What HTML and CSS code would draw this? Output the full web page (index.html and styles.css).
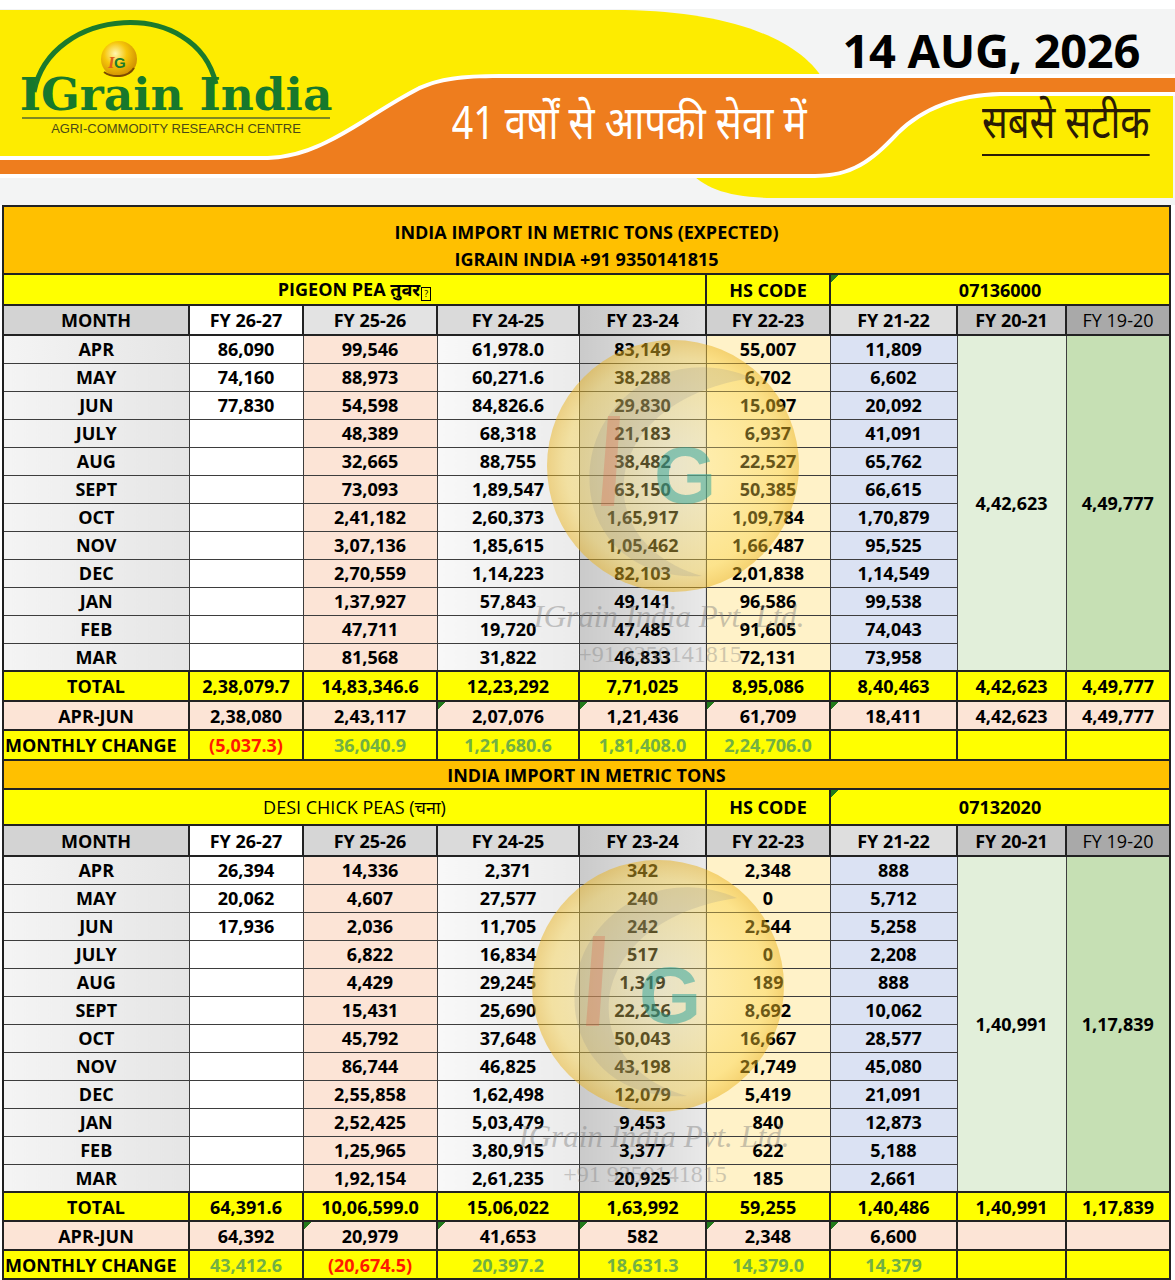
FILE: index.html
```html
<!DOCTYPE html>
<html lang="en">
<head>
<meta charset="utf-8">
<title>IGrain India - India Import</title>
<link rel="stylesheet" href="styles.css">
</head>
<body>
<header class="banner">
  <svg class="banner-art" width="1175" height="205" viewBox="0 0 1175 205">
    <defs>
      <radialGradient id="ball" cx="40%" cy="35%" r="70%">
        <stop offset="0" stop-color="#fff7b0"/>
        <stop offset="0.45" stop-color="#f6c60a"/>
        <stop offset="1" stop-color="#c98600"/>
      </radialGradient>
    </defs>
    <rect width="1175" height="205" fill="#f3f4f4"/>
    <rect width="1175" height="9" fill="#ffffff"/>
    <path d="M0 10 H625 C725 12 800 36 826 84 L826 156 H0 Z" fill="#fdec00"/>
    <path d="M688 170 C704 188 726 197 772 198 H1173 V86 H880 Z" fill="#fdec00"/>
    <path d="M-10 160 H268 C325 158 365 118 420 90 C440 81 460 78 500 78 H1185 V92 H1000 C958 93 922 106 896 132 C870 160 850 174 815 174 H-10 Z" fill="#ffffff" stroke="#ffffff" stroke-width="8" stroke-linejoin="round"/>
    <path d="M-10 160 H268 C325 158 365 118 420 90 C440 81 460 78 500 78 H1185 V92 H1000 C958 93 922 106 896 132 C870 160 850 174 815 174 H-10 Z" fill="#ee7d1e"/>
    <path d="M34 92 C50 6 196 -4 216 84" fill="none" stroke="#1b7a2c" stroke-width="5"/>
    <circle cx="119" cy="59" r="18" fill="url(#ball)"/>
    <path d="M104 72 C112 78 128 78 134 68" fill="none" stroke="#7a4a00" stroke-width="2"/>
    <text x="108" y="68" font-family="Liberation Serif, serif" font-style="italic" font-weight="700" font-size="17" fill="#e0601a">I</text>
    <text x="114" y="68" font-family="Liberation Sans, sans-serif" font-weight="700" font-size="15" fill="#1b7a2c">G</text>
  </svg>
  <div class="brand">
    <span class="brand-name">IGrain India</span>
    <span class="brand-rule"></span>
    <span class="brand-sub">AGRI-COMMODITY RESEARCH CENTRE</span>
  </div>
  <div class="date">14 AUG, 2026</div>
  <div class="tagline">41 वर्षों से आपकी सेवा में</div>
  <div class="motto">सबसे सटीक</div>
</header>

<main class="sheet">
  <table class="grid">
    <colgroup>
      <col class="c-month"><col class="c-2627"><col class="c-2526"><col class="c-2425"><col class="c-2324"><col class="c-2223"><col class="c-2122"><col class="c-2021"><col class="c-1920">
    </colgroup>
    <tbody>
      <tr class="r-title"><td colspan="9">INDIA IMPORT IN METRIC TONS (EXPECTED)<br>IGRAIN INDIA +91 9350141815</td></tr>
      <tr class="r-prod"><td colspan="5">PIGEON PEA तुवर<span class="tofu">?</span></td><td>HS CODE</td><td colspan="3" class="tri">07136000</td></tr>
      <tr class="r-head"><td class="h-month">MONTH</td><td class="h-2627">FY 26-27</td><td class="h-2526">FY 25-26</td><td class="h-2425">FY 24-25</td><td class="h-2324">FY 23-24</td><td class="h-2223">FY 22-23</td><td class="h-2122">FY 21-22</td><td class="h-2021">FY 20-21</td><td class="h-1920">FY 19-20</td></tr>
      <tr class="d"><td>APR</td><td>86,090</td><td>99,546</td><td>61,978.0</td><td>83,149</td><td>55,007</td><td>11,809</td><td rowspan="12" class="m20">4,42,623</td><td rowspan="12" class="m19">4,49,777</td></tr>
      <tr class="d"><td>MAY</td><td>74,160</td><td>88,973</td><td>60,271.6</td><td>38,288</td><td>6,702</td><td>6,602</td></tr>
      <tr class="d"><td>JUN</td><td>77,830</td><td>54,598</td><td>84,826.6</td><td>29,830</td><td>15,097</td><td>20,092</td></tr>
      <tr class="d"><td>JULY</td><td></td><td>48,389</td><td>68,318</td><td>21,183</td><td>6,937</td><td>41,091</td></tr>
      <tr class="d"><td>AUG</td><td></td><td>32,665</td><td>88,755</td><td>38,482</td><td>22,527</td><td>65,762</td></tr>
      <tr class="d"><td>SEPT</td><td></td><td>73,093</td><td>1,89,547</td><td>63,150</td><td>50,385</td><td>66,615</td></tr>
      <tr class="d"><td>OCT</td><td></td><td>2,41,182</td><td>2,60,373</td><td>1,65,917</td><td>1,09,784</td><td>1,70,879</td></tr>
      <tr class="d"><td>NOV</td><td></td><td>3,07,136</td><td>1,85,615</td><td>1,05,462</td><td>1,66,487</td><td>95,525</td></tr>
      <tr class="d"><td>DEC</td><td></td><td>2,70,559</td><td>1,14,223</td><td>82,103</td><td>2,01,838</td><td>1,14,549</td></tr>
      <tr class="d"><td>JAN</td><td></td><td>1,37,927</td><td>57,843</td><td>49,141</td><td>96,586</td><td>99,538</td></tr>
      <tr class="d"><td>FEB</td><td></td><td>47,711</td><td>19,720</td><td>47,485</td><td>91,605</td><td>74,043</td></tr>
      <tr class="d"><td>MAR</td><td></td><td>81,568</td><td>31,822</td><td>46,833</td><td>72,131</td><td>73,958</td></tr>
      <tr class="r-total"><td>TOTAL</td><td>2,38,079.7</td><td>14,83,346.6</td><td>12,23,292</td><td>7,71,025</td><td>8,95,086</td><td>8,40,463</td><td>4,42,623</td><td>4,49,777</td></tr>
      <tr class="r-aj"><td>APR-JUN</td><td>2,38,080</td><td>2,43,117</td><td class="tri">2,07,076</td><td class="tri">1,21,436</td><td class="tri">61,709</td><td class="tri">18,411</td><td>4,42,623</td><td>4,49,777</td></tr>
      <tr class="r-mc"><td class="mc-label">MONTHLY CHANGE</td><td class="neg">(5,037.3)</td><td class="pos">36,040.9</td><td class="pos">1,21,680.6</td><td class="pos">1,81,408.0</td><td class="pos">2,24,706.0</td><td></td><td></td><td></td></tr>

      <tr class="r-title2"><td colspan="9">INDIA IMPORT IN METRIC TONS</td></tr>
      <tr class="r-prod2"><td colspan="5" class="light">DESI CHICK PEAS (चना)</td><td>HS CODE</td><td colspan="3" class="tri">07132020</td></tr>
      <tr class="r-head r-head2"><td class="h-month">MONTH</td><td class="h-2627">FY 26-27</td><td class="h-2526b">FY 25-26</td><td class="h-2425">FY 24-25</td><td class="h-2324">FY 23-24</td><td class="h-2223">FY 22-23</td><td class="h-2122">FY 21-22</td><td class="h-2021">FY 20-21</td><td class="h-1920">FY 19-20</td></tr>
      <tr class="d"><td>APR</td><td>26,394</td><td>14,336</td><td>2,371</td><td>342</td><td>2,348</td><td>888</td><td rowspan="12" class="m20">1,40,991</td><td rowspan="12" class="m19">1,17,839</td></tr>
      <tr class="d"><td>MAY</td><td>20,062</td><td>4,607</td><td>27,577</td><td>240</td><td>0</td><td>5,712</td></tr>
      <tr class="d"><td>JUN</td><td>17,936</td><td>2,036</td><td>11,705</td><td>242</td><td>2,544</td><td>5,258</td></tr>
      <tr class="d"><td>JULY</td><td></td><td>6,822</td><td>16,834</td><td>517</td><td>0</td><td>2,208</td></tr>
      <tr class="d"><td>AUG</td><td></td><td>4,429</td><td>29,245</td><td>1,319</td><td>189</td><td>888</td></tr>
      <tr class="d"><td>SEPT</td><td></td><td>15,431</td><td>25,690</td><td>22,256</td><td>8,692</td><td>10,062</td></tr>
      <tr class="d"><td>OCT</td><td></td><td>45,792</td><td>37,648</td><td>50,043</td><td>16,667</td><td>28,577</td></tr>
      <tr class="d"><td>NOV</td><td></td><td>86,744</td><td>46,825</td><td>43,198</td><td>21,749</td><td>45,080</td></tr>
      <tr class="d"><td>DEC</td><td></td><td>2,55,858</td><td>1,62,498</td><td>12,079</td><td>5,419</td><td>21,091</td></tr>
      <tr class="d"><td>JAN</td><td></td><td>2,52,425</td><td>5,03,479</td><td>9,453</td><td>840</td><td>12,873</td></tr>
      <tr class="d"><td>FEB</td><td></td><td>1,25,965</td><td>3,80,915</td><td>3,377</td><td>622</td><td>5,188</td></tr>
      <tr class="d"><td>MAR</td><td></td><td>1,92,154</td><td>2,61,235</td><td>20,925</td><td>185</td><td>2,661</td></tr>
      <tr class="r-total r-total2"><td>TOTAL</td><td>64,391.6</td><td>10,06,599.0</td><td>15,06,022</td><td>1,63,992</td><td>59,255</td><td>1,40,486</td><td>1,40,991</td><td>1,17,839</td></tr>
      <tr class="r-aj r-aj2"><td>APR-JUN</td><td>64,392</td><td class="tri">20,979</td><td class="tri">41,653</td><td class="tri">582</td><td class="tri">2,348</td><td class="tri">6,600</td><td></td><td></td></tr>
      <tr class="r-mc r-mc2"><td class="mc-label">MONTHLY CHANGE</td><td class="pos">43,412.6</td><td class="neg">(20,674.5)</td><td class="pos">20,397.2</td><td class="pos">18,631.3</td><td class="pos">14,379.0</td><td class="pos">14,379</td><td></td><td></td></tr>
    </tbody>
  </table>

  <svg class="wm wm1" width="340" height="340" viewBox="0 0 340 340" aria-hidden="true">
    <defs>
      <radialGradient id="wg1" cx="50%" cy="50%" r="50%">
        <stop offset="0" stop-color="#ffec90" stop-opacity="0.3"/>
        <stop offset="0.85" stop-color="#f9cf3a" stop-opacity="0.42"/>
        <stop offset="1" stop-color="#eab21a" stop-opacity="0.5"/>
      </radialGradient>
    </defs>
    <circle cx="171" cy="136" r="126" fill="url(#wg1)"/>
    <path d="M250 48 C170 12 80 70 88 160 C94 215 140 250 200 246 C150 232 118 196 122 150 C128 96 180 58 250 48 Z" fill="#8a8a8a" opacity="0.2"/>
    <path d="M106 86 L118 86 L112 176 L99 176 Z" fill="#e2553a" opacity="0.25"/>
    <text x="152" y="173" font-family="Liberation Sans, sans-serif" font-weight="700" font-size="80" fill="#2aa39a" opacity="0.5">G</text>
    <text x="167" y="297" text-anchor="middle" font-family="Liberation Serif, serif" font-style="italic" font-size="31" fill="#777" opacity="0.4">IGrain India Pvt. Ltd.</text>
    <text x="158" y="332" text-anchor="middle" font-family="Liberation Serif, serif" font-size="24" fill="#777" opacity="0.35">+91 9350141815</text>
  </svg>
  <svg class="wm wm2" width="340" height="340" viewBox="0 0 340 340" aria-hidden="true">
    <defs>
      <radialGradient id="wg2" cx="50%" cy="50%" r="50%">
        <stop offset="0" stop-color="#ffec90" stop-opacity="0.3"/>
        <stop offset="0.85" stop-color="#f9cf3a" stop-opacity="0.42"/>
        <stop offset="1" stop-color="#eab21a" stop-opacity="0.5"/>
      </radialGradient>
    </defs>
    <circle cx="171" cy="136" r="126" fill="url(#wg2)"/>
    <path d="M250 48 C170 12 80 70 88 160 C94 215 140 250 200 246 C150 232 118 196 122 150 C128 96 180 58 250 48 Z" fill="#8a8a8a" opacity="0.2"/>
    <path d="M106 86 L118 86 L112 176 L99 176 Z" fill="#e2553a" opacity="0.25"/>
    <text x="152" y="173" font-family="Liberation Sans, sans-serif" font-weight="700" font-size="80" fill="#2aa39a" opacity="0.5">G</text>
    <text x="167" y="297" text-anchor="middle" font-family="Liberation Serif, serif" font-style="italic" font-size="31" fill="#777" opacity="0.4">IGrain India Pvt. Ltd.</text>
    <text x="158" y="332" text-anchor="middle" font-family="Liberation Serif, serif" font-size="24" fill="#777" opacity="0.35">+91 9350141815</text>
  </svg>
</main>
</body>
</html>
```

FILE: styles.css
```css
* { box-sizing: border-box; }
html, body { margin: 0; padding: 0; background: #ffffff; }
body {
  width: 1175px;
  font-family: "Open Sans", "Noto Sans", "Noto Sans Devanagari", sans-serif;
  color: #000;
}

/* ---------- banner ---------- */
.banner { position: relative; width: 1175px; height: 205px; overflow: hidden; }
.banner-art { display: block; }
.brand {
  position: absolute; left: 18px; top: 72px; width: 316px;
  display: flex; flex-direction: column; align-items: center;
}
.brand-name {
  font-family: "DejaVu Serif", "Liberation Serif", serif;
  font-weight: 700; font-size: 45.5px; line-height: 44px;
  color: #17782c; white-space: nowrap;
}
.brand-rule { width: 308px; height: 2px; background: #7f8a22; margin-top: 1px; }
.brand-sub {
  font-family: "Liberation Sans", Arial, sans-serif;
  font-size: 13px; line-height: 15px; color: #4b4a16; margin-top: 2px;
  white-space: nowrap;
}
.date {
  position: absolute; right: 35px; top: 22px;
  font-weight: 700; font-size: 47px; line-height: 56px; letter-spacing: -0.3px;
  white-space: nowrap;
}
.tagline {
  position: absolute; left: 452px; top: 99px;
  color: #fff; font-size: 46px; line-height: 58px;
  font-family: "Noto Sans Devanagari", "Noto Sans", sans-serif;
  white-space: nowrap;
  transform: scaleX(0.84); transform-origin: left center;
}
.motto {
  position: absolute; left: 982px; top: 100px;
  font-size: 46px; line-height: 54px; color: #2a1c05;
  font-family: "Noto Sans Devanagari", "Noto Sans", sans-serif;
  border-bottom: 2px solid #2a1c05; white-space: nowrap;
  transform: scaleX(0.83); transform-origin: left center;
}

/* ---------- sheet ---------- */
.sheet { position: relative; margin-left: 2px; width: 1167px; }
.grid {
  border-collapse: collapse; table-layout: fixed; width: 1167px;
  font-size: 18px; font-weight: 700; border: 2px solid #1f1f1f;
}
.c-month { width: 186px; }
.c-2627 { width: 114px; }
.c-2526 { width: 134px; }
.c-2425 { width: 142px; }
.c-2324 { width: 127px; }
.c-2223 { width: 124px; }
.c-2122 { width: 127px; }
.c-2021 { width: 109px; }
.c-1920 { width: 104px; }

.grid td {
  border: 1px solid #3d3d3d; text-align: center; vertical-align: middle;
  padding: 0; line-height: 20px; white-space: nowrap; height: 28px;
}

.r-title td { background: #ffc000; height: 68px; line-height: 27px; padding-top: 12px; border: 2px solid #222; }
.r-title2 td { background: #ffc000; height: 29px; border: 2px solid #222; }
.r-prod td { background: #ffff00; height: 31px; border: 2px solid #222; }
.r-prod2 td { background: #ffff00; height: 36px; border: 2px solid #222; }
.r-prod2 td.light { font-weight: 400; }
.r-head td { height: 30px; border: 2px solid #222; font-weight: 700; }
.r-head2 td { height: 31px; }
.tofu {
  display: inline-block; width: 10px; height: 14px; margin-left: 1px;
  border: 1px solid #000; font-size: 9px; line-height: 12px;
  vertical-align: -1px; font-weight: 400;
}

.h-month { background: #d3d3d3; }
.h-2627 { background: #ffffff; }
.h-2526 { background: #e3e3e3; }
.h-2526b { background: #d6d6d6; }
.h-2425 { background: #dadada; }
.h-2324 { background: linear-gradient(90deg, #c9c9c9, #dedede); }
.h-2223 { background: #d0d0d0; }
.h-2122 { background: #dedede; }
.h-2021 { background: #c6c6c6; }
.grid td.h-1920 { background: #a9a9a9; font-weight: 400; }

.d td:nth-child(1) { background: linear-gradient(90deg, #f4f4f4, #e5e5e5); }
.d td:nth-child(2) { background: #ffffff; }
.d td:nth-child(3) { background: #fce4d6; }
.d td:nth-child(4) { background: linear-gradient(90deg, #f8f8f8, #ebebeb); }
.d td:nth-child(5) { background: linear-gradient(90deg, #cacaca, #e9e9e9); }
.d td:nth-child(6) { background: #fff2c8; }
.d td:nth-child(7) { background: #dbe2f3; }
.d td.m20 { background: #e2efda; }
.d td.m19 { background: #c6e0b4; }

.r-total td { background: #ffff00; height: 30px; border: 2px solid #222; }
.r-aj td { background: #fce4d6; height: 29px; border: 2px solid #222; }
.r-mc td { background: #ffff00; height: 30px; border: 2px solid #222; }
.r-total2 td { height: 29px; }
.r-mc2 td { height: 29px; }
.grid td.mc-label { text-align: left; padding-left: 1px; }
.grid td.neg { color: #ff1a00; }
.grid td.pos { color: #72b043; }
.grid td.tri { background-image: linear-gradient(135deg, #237a1c 0 5px, transparent 5px); }

/* ---------- watermark ---------- */
.wm { position: absolute; pointer-events: none; }
.wm1 { left: 500px; top: 125px; }
.wm2 { left: 485px; top: 645px; }
```
